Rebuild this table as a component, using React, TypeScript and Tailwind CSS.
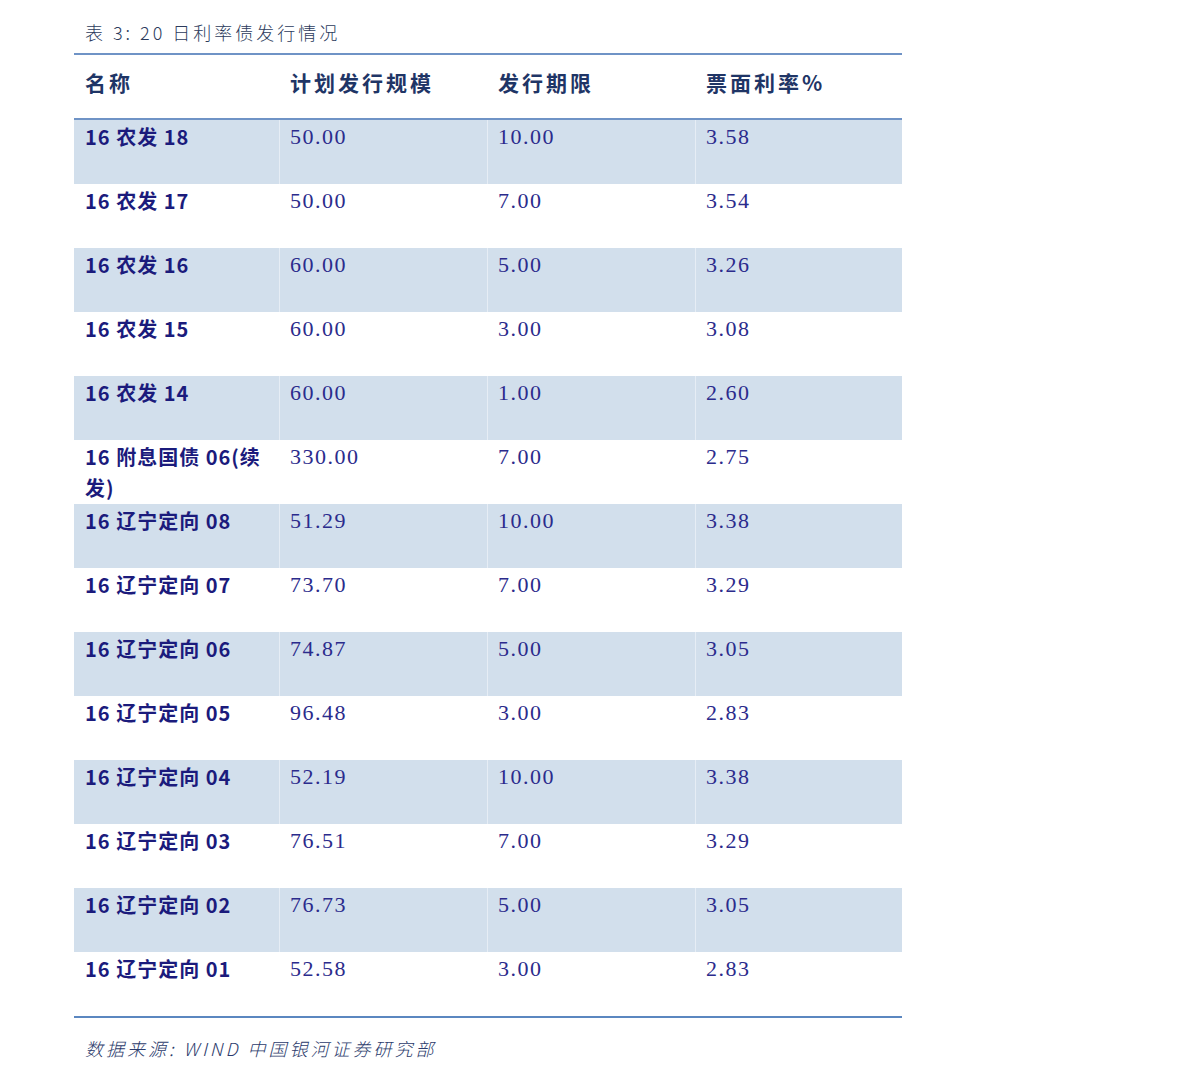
import React from "react";

const rows: [string, string, string, string][] = [
  ["16 农发 18", "50.00", "10.00", "3.58"],
  ["16 农发 17", "50.00", "7.00", "3.54"],
  ["16 农发 16", "60.00", "5.00", "3.26"],
  ["16 农发 15", "60.00", "3.00", "3.08"],
  ["16 农发 14", "60.00", "1.00", "2.60"],
  ["16 附息国债 06(续发)", "330.00", "7.00", "2.75"],
  ["16 辽宁定向 08", "51.29", "10.00", "3.38"],
  ["16 辽宁定向 07", "73.70", "7.00", "3.29"],
  ["16 辽宁定向 06", "74.87", "5.00", "3.05"],
  ["16 辽宁定向 05", "96.48", "3.00", "2.83"],
  ["16 辽宁定向 04", "52.19", "10.00", "3.38"],
  ["16 辽宁定向 03", "76.51", "7.00", "3.29"],
  ["16 辽宁定向 02", "76.73", "5.00", "3.05"],
  ["16 辽宁定向 01", "52.58", "3.00", "2.83"],
];

const cols = "grid grid-cols-[205px_208px_208px_207px]";
const cjk = "font-['Noto_Sans_CJK_SC',sans-serif]";
const num = "font-['Liberation_Serif','Noto_Sans_CJK_SC',serif]";

export default function App() {
  return (
    <div className="min-h-[1083px] bg-white pl-[74px]">
      <div className="w-[828px]">
        <div className={`h-[53px] pt-[20px] pl-[11px] text-[18px] leading-[24px] font-light tracking-[3px] text-[#2c3b5c] ${cjk}`}>
          表 3: 20 日利率债发行情况
        </div>
        <div className="border-t-2 border-[#6f93c6]" />
        <div className={`${cols} h-[63px] pt-[11px] text-[21px] leading-[32px] font-bold tracking-[3px] text-[#1f3566] ${cjk}`}>
          <div className="px-[11px]">名称</div>
          <div className="px-[11px]">计划发行规模</div>
          <div className="px-[11px]">发行期限</div>
          <div className="px-[11px]">票面利率%</div>
        </div>
        <div className="border-t-2 border-[#6f93c6]" />
        {rows.map((r, i) => {
          const shaded = i % 2 === 0;
          return (
            <div
              key={i}
              className={`${cols} h-[64px] ${shaded ? "bg-[#d2dfec]" : "bg-white"}`}
            >
              <div className={`px-[11px] pt-px text-[20px] leading-[31px] font-bold tracking-[1px] text-[#1b1b7c] ${cjk}`}>
                {r[0]}
              </div>
              {r.slice(1).map((v, j) => (
                <div
                  key={j}
                  className={`border-l ${shaded ? "border-[#e6edf5]" : "border-white"} px-[10px] pt-px text-[22px] leading-[32px] tracking-[1.5px] text-[#2b2b8c] ${num}`}
                >
                  {v}
                </div>
              ))}
            </div>
          );
        })}
        <div className="border-t-2 border-[#5b87c0]" />
        <div className={`mt-[18px] pl-[11px] text-[18px] leading-[24px] italic font-light tracking-[3px] text-[#2c3b6c] ${cjk}`}>
          数据来源: WIND 中国银河证券研究部
        </div>
      </div>
    </div>
  );
}
